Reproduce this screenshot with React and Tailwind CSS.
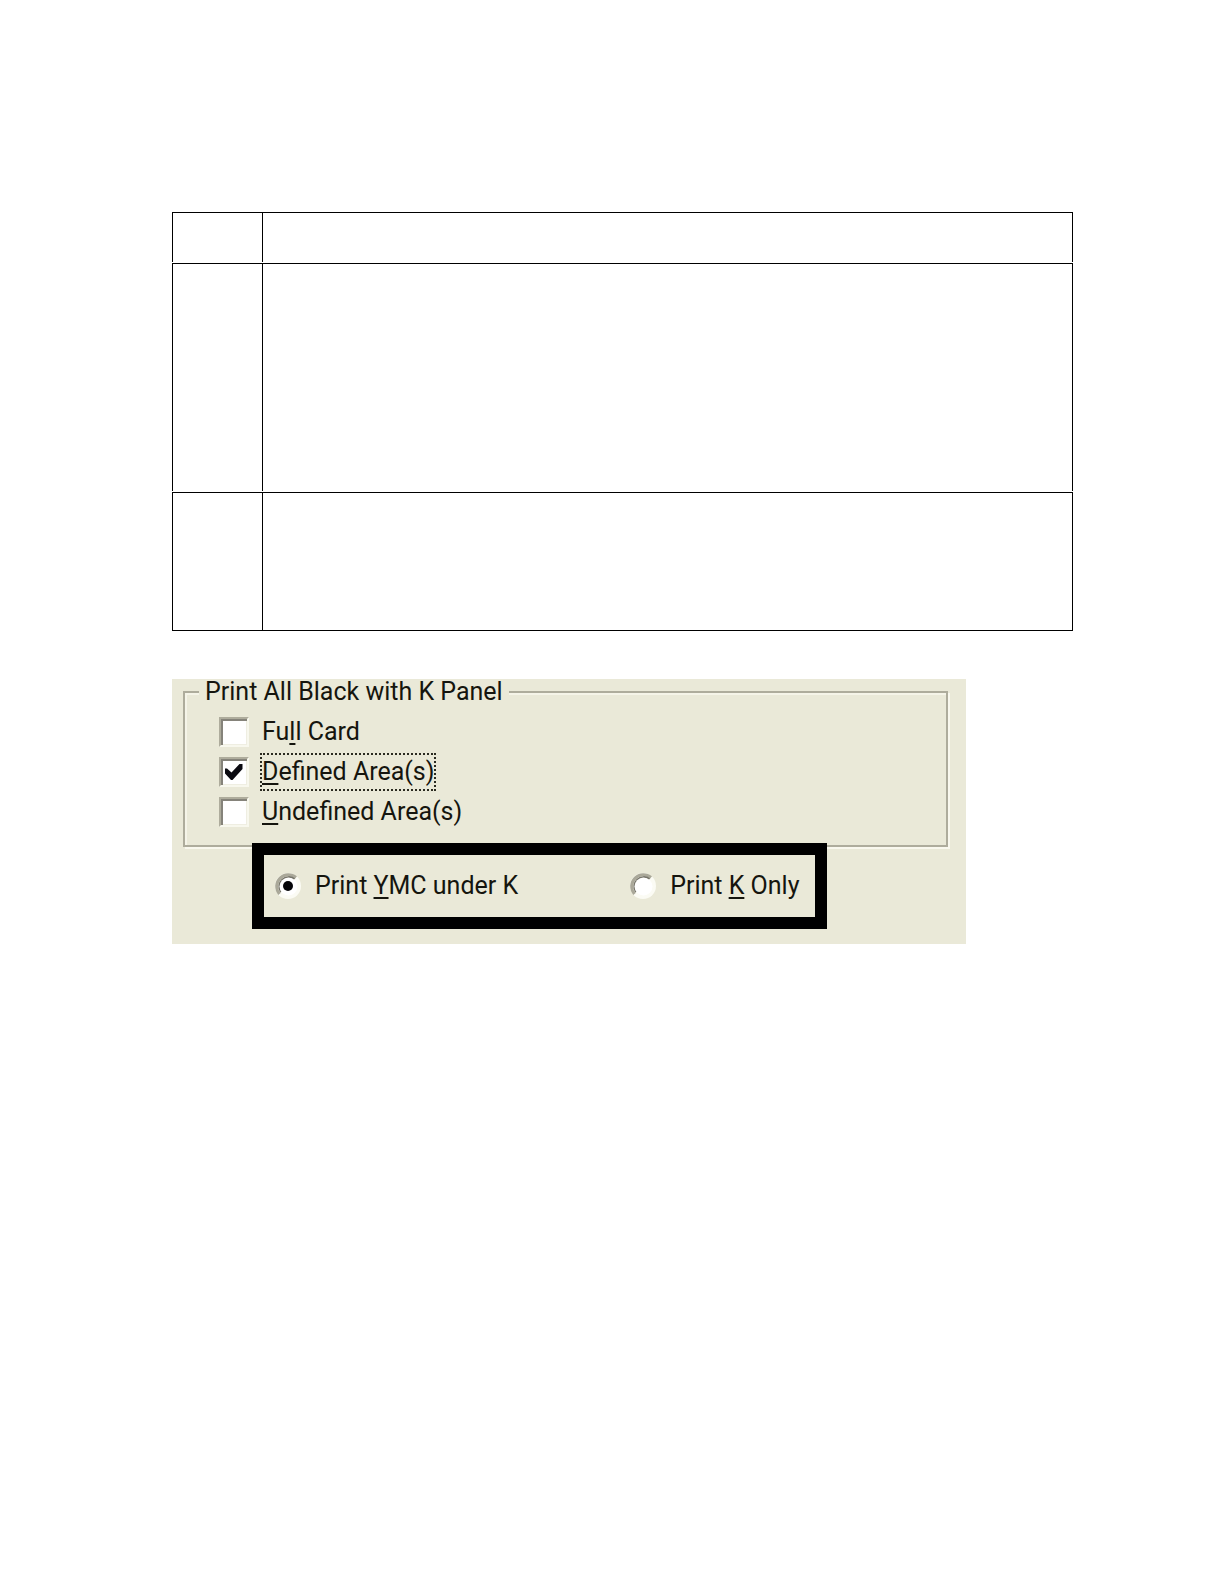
const rows = ["h-[50px]", "h-[228px]", "h-[139px]"];

function Tick() {
  return (
    <svg
      viewBox="0 0 18 18"
      className="pointer-events-none absolute left-[6px] top-[6px] h-[18px] w-[18px]"
      aria-hidden="true"
    >
      <path d="M0 5.500 H2 L6.500 9.500 L14.500 1 H17.500 V6 L7.500 17 H6 L0 10.500 Z" fill="#0a0a10" />
    </svg>
  );
}

function Check({ id, checked, focused, children }) {
  return (
    <div className="flex items-center gap-[13px]">
      <span className="relative flex h-[30px] w-[30px]">
        <input
          id={id}
          type="checkbox"
          defaultChecked={checked}
          className="peer h-[30px] w-[30px] appearance-none border-2 border-t-[#aeac9c] border-l-[#aeac9c] border-r-[#f8f8ee] border-b-[#f8f8ee] bg-white shadow-[inset_2px_2px_0_#85837a,inset_-1px_-1px_0_#efeee2]"
        />
        <span className="hidden peer-checked:block">
          <Tick />
        </span>
      </span>
      <label
        htmlFor={id}
        className={
          focused
            ? "leading-[34px] outline-2 outline-dotted outline-[#2a2a20]"
            : "leading-[34px]"
        }
      >
        {children}
      </label>
    </div>
  );
}

function Radio({ id, checked, children }) {
  return (
    <div className="flex items-center gap-[13px]">
      <span className="relative flex h-7 w-7">
        <input
          id={id}
          name="k-mode"
          type="radio"
          defaultChecked={checked}
          className="peer h-7 w-7 appearance-none rounded-full"
        />
        <svg
          viewBox="0 0 28 28"
          className="pointer-events-none absolute inset-0 h-7 w-7"
          aria-hidden="true"
        >
          <circle cx="14" cy="14" r="13" fill="#fbfbf4" />
          <path d="M5.500 22 A11.700 11.700 0 0 1 22 5.500" fill="none" stroke="#aaa899" strokeWidth="3" />
          <path d="M7 20 A9.500 9.500 0 0 1 20.500 7" fill="none" stroke="#77756a" strokeWidth="2" />
          <circle cx="14.500" cy="14.500" r="9" fill="#fff" />
        </svg>
        <span className="pointer-events-none absolute left-[9px] top-[9px] hidden h-2.5 w-2.5 rounded-full bg-[#050508] peer-checked:block" />
      </span>
      <label htmlFor={id} className="leading-[34px]">
        {children}
      </label>
    </div>
  );
}

function Key({ children }) {
  return <u className="decoration-2 underline-offset-3 [text-decoration-skip-ink:none]">{children}</u>;
}

export default function App() {
  return (
    <main className="min-h-screen bg-white pt-[211px] pr-[151px] pl-[172px] pb-16">
      <table className="w-full table-fixed border-separate border-spacing-x-0 border-spacing-y-px">
        <colgroup>
          <col className="w-[90px]" />
          <col />
        </colgroup>
        <tbody>
          {rows.map((height, i) => {
            const edge = i === rows.length - 1 ? "border-b" : "";
            return (
              <tr key={height} className={height}>
                <td className={`border-t border-l border-black p-0 ${edge}`} />
                <td className={`border-x border-t border-black p-0 ${edge}`} />
              </tr>
            );
          })}
        </tbody>
      </table>

      <form className="mt-[47px] w-full max-w-[794px] bg-[#eae9d8] pr-[18px] pb-[15px] pl-[11px] font-[Roboto,sans-serif] text-[25px] text-[#15150e]">
        <fieldset className="border-2 border-[#aeac9c] pb-4 pl-[34px] shadow-[2px_2px_0_#f9f8ee,inset_2px_2px_0_#f5f4e8]">
          <legend className="-ml-5 bg-[#eae9d8] px-1.5 leading-[26px]">
            Print All Black with K Panel
          </legend>
          <div className="flex flex-col gap-1.5 pt-2.5">
            <Check id="full">
              Fu<Key>l</Key>l Card
            </Check>
            <Check id="defined" checked focused>
              <Key>D</Key>efined Area(s)
            </Check>
            <Check id="undefined">
              <Key>U</Key>ndefined Area(s)
            </Check>
          </div>
        </fieldset>
        <div className="relative -mt-1 ml-[69px] flex h-[86px] w-fit items-center gap-[111px] border-12 border-black bg-[#eae9d8] pr-4 pl-2.5">
          <Radio id="ymc" checked>
            Print <Key>Y</Key>MC under K
          </Radio>
          <Radio id="konly">
            Print <Key>K</Key> Only
          </Radio>
        </div>
      </form>
    </main>
  );
}
